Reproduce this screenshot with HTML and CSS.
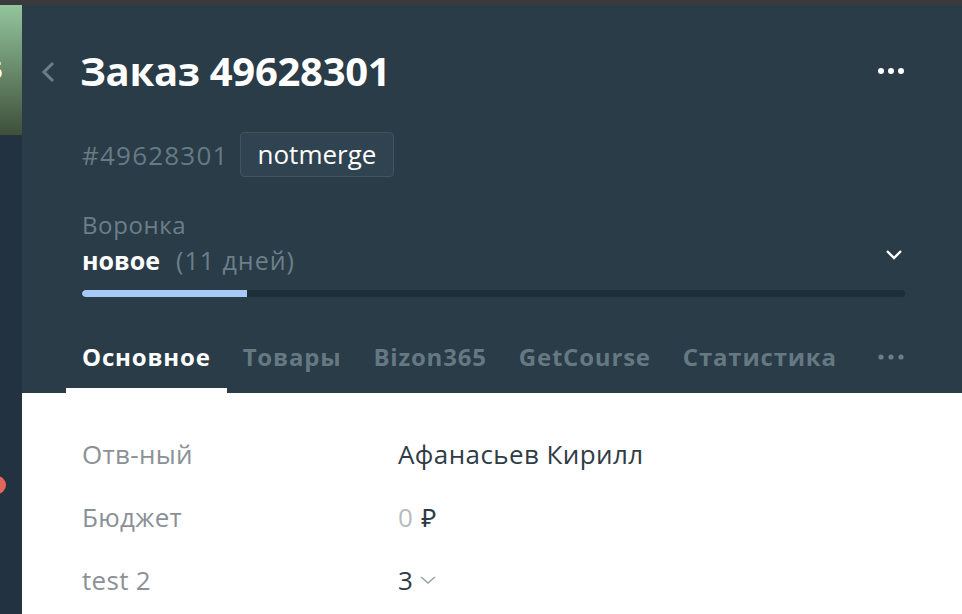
FILE: index.html
```html
<!DOCTYPE html>
<html lang="ru">
<head>
<meta charset="utf-8">
<title>Заказ 49628301</title>
<link rel="stylesheet" href="styles.css">
</head>
<body>
<div class="topline"></div>
<div class="screen">
  <aside class="strip">
    <div class="strip-top"><span class="strip-num">5</span></div>
    <div class="strip-rest"><span class="strip-badge"></span></div>
  </aside>
  <main class="card">
    <header class="head">
      <div class="title-row">
        <svg class="back" width="16" height="22" viewBox="0 0 16 22"><path d="M13 2 L4 11 L13 20" fill="none" stroke="#6b7d87" stroke-width="3"/></svg>
        <h1 class="title">Заказ 49628301</h1>
        <svg class="more" width="28" height="8" viewBox="0 0 28 8"><circle cx="4" cy="4" r="3" fill="#fff"/><circle cx="14" cy="4" r="3" fill="#fff"/><circle cx="24" cy="4" r="3" fill="#fff"/></svg>
      </div>
      <div class="meta-row">
        <span class="id">#49628301</span>
        <span class="tag">notmerge</span>
      </div>
      <div class="funnel">
        <div class="funnel-label">Воронка</div>
        <div class="funnel-row">
          <span class="stage">новое</span><span class="days">(11 дней)</span>
          <svg class="down" width="18" height="12" viewBox="0 0 18 12"><path d="M2 2 L9 9 L16 2" fill="none" stroke="#fff" stroke-width="2.4"/></svg>
        </div>
        <div class="progress"><div class="progress-fill" style="width:20%"></div></div>
      </div>
      <nav class="tabs">
        <span class="tab active">Основное</span>
        <span class="tab">Товары</span>
        <span class="tab">Bizon365</span>
        <span class="tab">GetCourse</span>
        <span class="tab">Статистика</span>
        <span class="tab tab-more"><svg width="28" height="8" viewBox="0 0 28 8"><circle cx="4" cy="4" r="2.6" fill="#6b7d87"/><circle cx="14" cy="4" r="2.6" fill="#6b7d87"/><circle cx="24" cy="4" r="2.6" fill="#6b7d87"/></svg></span>
      </nav>
    </header>
    <section class="fields">
      <div class="field"><span class="label">Отв-ный</span><span class="value">Афанасьев Кирилл</span></div>
      <div class="field"><span class="label">Бюджет</span><span class="value"><span class="zero">0</span> ₽</span></div>
      <div class="field"><span class="label">test 2</span><span class="value">3 <svg class="sel" width="18" height="12" viewBox="0 0 18 12"><path d="M2 3 L9 9 L16 3" fill="none" stroke="#9aa3a8" stroke-width="1.6"/></svg></span></div>
    </section>
  </main>
</div>
</body>
</html>
```

FILE: styles.css
```css
* { box-sizing: border-box; margin: 0; padding: 0; }
html, body { width: 962px; height: 614px; overflow: hidden; }
body {
  background: #fff;
  font-family: "Open Sans", "Noto Sans", sans-serif;
}
.topline { height: 5px; background: #3a3a3b; }
.screen { display: flex; height: 609px; }
.strip { width: 22px; flex-shrink: 0; display: flex; flex-direction: column; overflow: hidden; }
.strip-top {
  height: 130px;
  background: linear-gradient(#93c59c, #3e4f3a);
  position: relative;
}
.strip-num {
  position: absolute; left: -11px; top: 50px;
  color: #fff; font-size: 24px; font-weight: 700; line-height: 30px;
}
.strip-rest { flex: 1; background: #233241; position: relative; }
.strip-badge {
  position: absolute; left: -12px; top: 341px;
  width: 18px; height: 18px; border-radius: 50%; background: #e0675a;
}
.card { flex: 1; min-width: 0; display: flex; flex-direction: column; }
.head { background: #293c48; padding: 35px 57px 0 18px; }
.title-row { display: flex; align-items: center; height: 62px; }
.back { margin-right: 24px; margin-top: 2px; }
.title { color: #fff; font-size: 40px; font-weight: 700; letter-spacing: -0.3px; flex: 1; line-height: 62px; }
.meta-row { display: flex; align-items: center; margin-top: 30px; padding-left: 42px; }
.id { color: #677a85; font-size: 26px; letter-spacing: 1.2px; margin-right: 11px; }
.tag {
  color: #fff; font-size: 26px; height: 45px; line-height: 42px;
  padding: 0 17px; border: 1px solid #42545e; background: #2f4350; border-radius: 4px;
}
.funnel { padding-left: 42px; margin-top: 33px; }
.funnel-label { color: #6c7f89; font-size: 24px; letter-spacing: 0.6px; line-height: 30px; }
.funnel-row { display: flex; align-items: center; height: 36px; margin-top: 2px; }
.stage { color: #fff; font-weight: 700; font-size: 25px; }
.days { color: #6c7f89; font-size: 25px; letter-spacing: 1px; margin-left: 16px; flex: 1; }
.down { margin-right: 2px; margin-bottom: 10px; }
.progress { height: 7px; border-radius: 4px; background: #1e2e38; margin-top: 12px; overflow: hidden; }
.progress-fill { height: 100%; background: #a6c9f6; border-radius: 4px 0 0 4px; }
.tabs { display: flex; margin-top: 28px; margin-left: 26px; }
.tab {
  color: #667882; font-size: 24px; font-weight: 700; line-height: 30px;
  padding: 17px 16px 16px 16px; border-bottom: 5px solid transparent;
  letter-spacing: 0.8px;
}
.tab.active { color: #fff; border-bottom-color: #fff; }
.tab-more { margin-left: 8px; display: flex; align-items: center; }
.fields { padding: 29px 0 0 60px; }
.field { display: flex; align-items: center; height: 63px; font-size: 26px; }
.label { color: #8b9196; width: 316px; letter-spacing: 0.3px; }
.value { color: #2f3c45; display: flex; align-items: center; letter-spacing: 0.4px; }
.zero { color: #b7bbbe; margin-right: 8px; }
.sel { margin-left: 6px; }
```
